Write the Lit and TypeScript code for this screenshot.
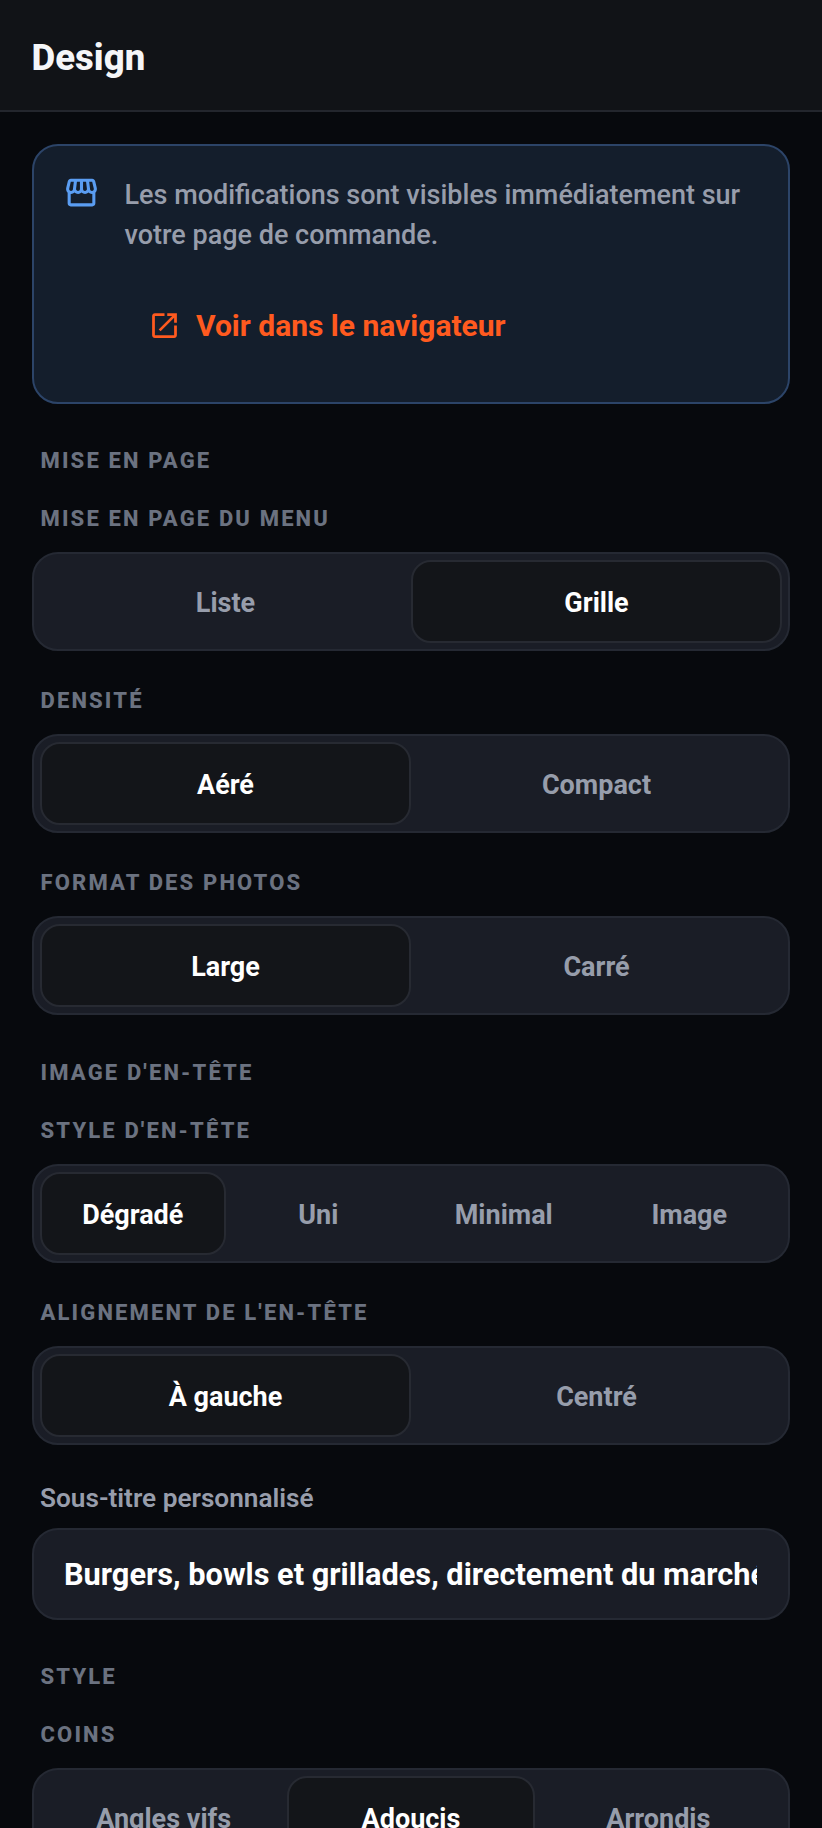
import { LitElement, html, css } from "lit"
import { customElement } from "lit/decorators.js"
import { classMap } from "lit/directives/class-map.js"

@customElement("seg-control")
export class SegControl extends LitElement {
    static properties = {
        options: { type: Array },
        active: { type: Number },
    }

    options: string[] = []
    active = 0

    static styles = css`
        :host {
            display: block;
        }
        .track {
            display: grid;
            grid-auto-flow: column;
            grid-auto-columns: 1fr;
            height: 99px;
            box-sizing: border-box;
            padding: 6px;
            background: #1a1d26;
            border: 2px solid #252933;
            border-radius: 26px;
        }
        .opt {
            display: flex;
            align-items: center;
            justify-content: center;
            padding-top: 2px;
            border: 2px solid transparent;
            border-radius: 20px;
            font: 700 27px Roboto, sans-serif;
            color: #979dab;
        }
        .opt.on {
            background: #131519;
            border-color: #272a32;
            color: #ffffff;
        }
    `

    render() {
        return html`<div class="track">
            ${this.options.map(
                (o, i) => html`<div class=${classMap({ opt: true, on: i === this.active })}>${o}</div>`
            )}
        </div>`
    }
}

@customElement("app-root")
export class AppRoot extends LitElement {
    static styles = css`
        :host {
            display: block;
            height: 100vh;
            overflow: hidden;
            background: #07090d;
            font-family: Roboto, sans-serif;
        }
        header {
            display: flex;
            align-items: center;
            height: 105px;
            padding: 5px 32px 0 31.5px;
            background: #111317;
            border-bottom: 2px solid #23262d;
        }
        h1 {
            margin: 0 0 1px;
            font-size: 36.6px;
            font-weight: 800;
            color: #f5f6f8;
        }
        main {
            padding: 32px 32px 0;
        }
        .notice {
            box-sizing: border-box;
            height: 260px;
            padding: 29px;
            background: #141e2c;
            border: 2px solid #2c4468;
            border-radius: 26px;
        }
        .notice-row {
            display: flex;
            gap: 24.5px;
        }
        .notice-row svg {
            flex: none;
            width: 37px;
            height: 37px;
            margin-top: -1px;
            fill: #5a9df2;
        }
        .notice-row p {
            margin: 0;
            font-size: 27px;
            font-weight: 500;
            line-height: 40px;
            color: #979dab;
        }
        .open {
            display: flex;
            align-items: center;
            gap: 15px;
            margin: 53px 0 0 85px;
            font-size: 30px;
            font-weight: 700;
            color: #ff5a1f;
        }
        .open svg {
            width: 33px;
            height: 33px;
            fill: currentColor;
        }
        .section {
            margin: 44px 0 0 8.5px;
        }
        .group:not(.field) + .section {
            margin-top: 45px;
        }
        .label {
            font-size: 22px;
            font-weight: 800;
            letter-spacing: 2.15px;
            line-height: 26px;
            color: #6b7280;
            text-transform: uppercase;
        }
        .group {
            margin-top: 37px;
        }
        .section + .group {
            margin-top: 32px;
        }
        .group .label {
            margin: 0 0 20px 8.5px;
        }
        .group.field {
            margin-top: 40px;
        }
        .field-label {
            margin: 0 0 17px 8px;
            font-size: 26.2px;
            font-weight: 600;
            line-height: 26px;
            color: #979dab;
        }
        input {
            display: block;
            width: 100%;
            height: 92px;
            box-sizing: border-box;
            padding: 0 31px 0 30px;
            background: #1a1d26;
            border: 2px solid #252933;
            border-radius: 26px;
            outline: none;
            font: 700 30.75px Roboto, sans-serif;
            color: #ffffff;
        }
    `

    seg(label: string, options: string[], active: number) {
        return html`<div class="group">
            <div class="label">${label}</div>
            <seg-control .options=${options} .active=${active}></seg-control>
        </div>`
    }

    render() {
        return html`
            <header><h1>Design</h1></header>
            <main>
                <div class="notice">
                    <div class="notice-row">
                        <svg viewBox="0 0 24 24">
                            <path
                                d="M21.9,8.89l-1.05-4.37c-0.22-0.9-1-1.52-1.91-1.52H5.05C4.15,3,3.36,3.63,3.15,4.52L2.1,8.89c-0.24,1.02-0.02,2.06,0.62,2.88C2.8,11.88,2.91,11.96,3,12.06V19c0,1.1,0.9,2,2,2h14c1.1,0,2-0.9,2-2v-6.94c0.09-0.09,0.2-0.18,0.28-0.28C21.92,10.96,22.15,9.91,21.9,8.89z M18.91,4.99l1.05,4.37c0.1,0.42,0.01,0.84-0.25,1.17C19.57,10.71,19.27,11,18.77,11c-0.61,0-1.14-0.49-1.21-1.14L16.98,5L18.91,4.99z M13,5h1.96l0.54,4.52c0.05,0.39-0.07,0.78-0.33,1.07C14.95,10.85,14.63,11,14.22,11C13.55,11,13,10.41,13,9.69V5z M8.49,9.52L9.04,5H11v4.69C11,10.41,10.45,11,9.71,11c-0.34,0-0.65-0.15-0.89-0.41C8.57,10.3,8.45,9.91,8.49,9.52z M4.04,9.36L5.05,5h1.97L6.44,9.86C6.36,10.51,5.84,11,5.23,11c-0.49,0-0.8-0.29-0.93-0.47C4.03,10.21,3.94,9.78,4.04,9.36z M5,19v-6.03C5.08,12.98,5.15,13,5.23,13c0.87,0,1.66-0.36,2.24-0.95c0.6,0.6,1.4,0.95,2.31,0.95c0.87,0,1.65-0.36,2.23-0.93c0.59,0.57,1.39,0.93,2.29,0.93c0.84,0,1.64-0.35,2.24-0.95c0.58,0.59,1.37,0.95,2.24,0.95c0.08,0,0.15-0.02,0.23-0.03V19H5z"
                            />
                        </svg>
                        <p>Les modifications sont visibles immédiatement sur votre page de commande.</p>
                    </div>
                    <div class="open">
                        <svg viewBox="0 0 24 24">
                            <path
                                d="M19 19H5V5h7V3H5c-1.11 0-2 .9-2 2v14c0 1.1.89 2 2 2h14c1.1 0 2-.9 2-2v-7h-2v7zM14 3v2h3.59l-9.83 9.83 1.41 1.41L19 6.41V10h2V3h-7z"
                            />
                        </svg>
                        Voir dans le navigateur
                    </div>
                </div>

                <div class="section label">Mise en page</div>
                ${this.seg("Mise en page du menu", ["Liste", "Grille"], 1)}
                ${this.seg("Densité", ["Aéré", "Compact"], 0)}
                ${this.seg("Format des photos", ["Large", "Carré"], 0)}

                <div class="section label">Image d'en-tête</div>
                ${this.seg("Style d'en-tête", ["Dégradé", "Uni", "Minimal", "Image"], 0)}
                ${this.seg("Alignement de l'en-tête", ["À gauche", "Centré"], 0)}

                <div class="group field">
                    <div class="field-label">Sous-titre personnalisé</div>
                    <input value="Burgers, bowls et grillades, directement du marché" />
                </div>

                <div class="section label">Style</div>
                ${this.seg("Coins", ["Angles vifs", "Adoucis", "Arrondis"], 1)}
            </main>
        `
    }
}
